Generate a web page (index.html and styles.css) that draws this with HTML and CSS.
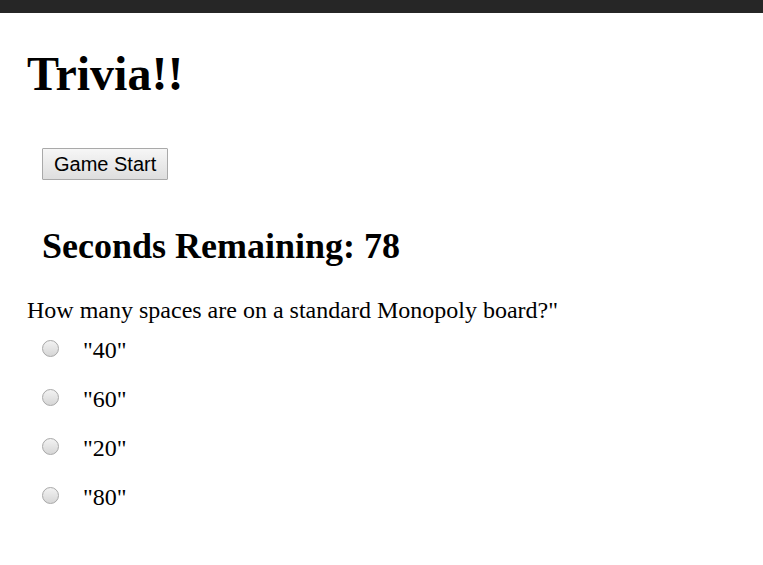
FILE: index.html
```html
<!DOCTYPE html>
<html lang="en">
<head>
<meta charset="utf-8">
<title>Trivia!!</title>
<link rel="stylesheet" href="styles.css">
</head>
<body>
<div class="topbar"></div>
<main class="page">
  <h1 class="title">Trivia!!</h1>
  <div class="controls">
    <button class="start-btn" type="button">Game Start</button>
  </div>
  <h2 class="timer">Seconds Remaining: 78</h2>
  <p class="question">How many spaces are on a standard Monopoly board?"</p>
  <div class="options">
    <label class="option"><input class="radio" type="radio" name="q1"><span class="option-text">"40"</span></label>
    <label class="option"><input class="radio" type="radio" name="q1"><span class="option-text">"60"</span></label>
    <label class="option"><input class="radio" type="radio" name="q1"><span class="option-text">"20"</span></label>
    <label class="option"><input class="radio" type="radio" name="q1"><span class="option-text">"80"</span></label>
  </div>
</main>
</body>
</html>
```
FILE: styles.css
```css
html, body {
  margin: 0;
  padding: 0;
  background: #ffffff;
}

body {
  font-family: "Liberation Serif", "Times New Roman", serif;
  color: #000;
}

.topbar {
  height: 13px;
  background: #262626;
}

.page {
  padding: 33px 27px 0 27px;
  display: flex;
  flex-direction: column;
  align-items: flex-start;
}

.title {
  margin: 0;
  font-size: 48px;
  line-height: 56px;
  font-weight: bold;
}

.controls {
  margin-top: 46px;
  padding-left: 15px;
}

.start-btn {
  font-family: "Liberation Sans", Arial, sans-serif;
  font-size: 20px;
  line-height: 23px;
  height: 32px;
  padding: 0 11px;
  color: #000;
  background: linear-gradient(#f6f6f6, #dedede);
  border: 1px solid #a9a9a9;
  border-radius: 1px;
  margin: 0;
  box-sizing: border-box;
}

.timer {
  margin: 45px 0 0 0;
  padding-left: 15px;
  font-size: 36px;
  line-height: 42px;
  font-weight: bold;
}

.question {
  margin: 30px 0 0 0;
  font-size: 24px;
  line-height: 27px;
}

.options {
  margin-top: 13px;
  padding-left: 15px;
  display: flex;
  flex-direction: column;
  gap: 22px;
}

.option {
  display: flex;
  align-items: flex-start;
  font-size: 24px;
  line-height: 27px;
}

.radio {
  appearance: none;
  -webkit-appearance: none;
  width: 17px;
  height: 17px;
  margin: 3px 0 0 0;
  border-radius: 50%;
  border: 1px solid #a8a8a8;
  background: linear-gradient(#f2f2f2, #d6d6d6);
  box-sizing: border-box;
  flex: none;
}

.option-text {
  margin-left: 24px;
}
```
